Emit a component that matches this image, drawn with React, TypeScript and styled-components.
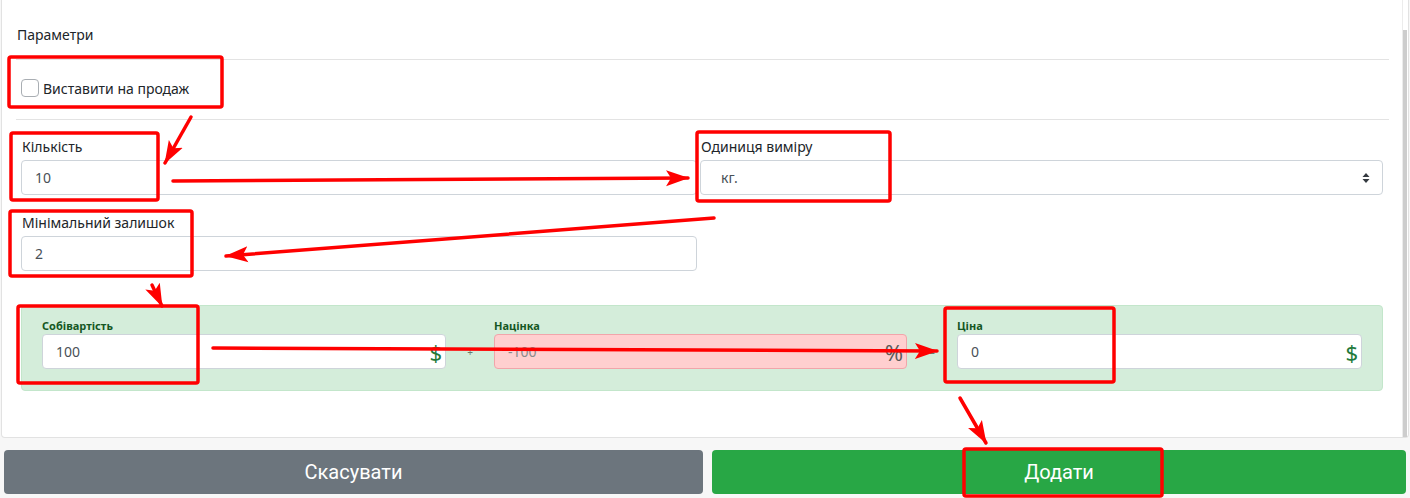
import styled, { createGlobalStyle } from "styled-components";

const GlobalStyle = createGlobalStyle`
	html, body {
		margin: 0;
		padding: 0;
		background: #ffffff;
		font-family: "Noto Sans", "Open Sans", Arial, sans-serif;
		color: #212529;
	}
	* {
		box-sizing: border-box;
	}
`;

export default function App() {
	return (
		<Page>
			<GlobalStyle />
			<Card>
				<CardBody>
					<SectionTitle>Параметри</SectionTitle>
					<CheckRow>
						<CheckBox type="checkbox" />
						<span>Виставити на продаж</span>
					</CheckRow>
					<FieldsGrid>
						<Field>
							<FieldLabel>Кількість</FieldLabel>
							<TextInput defaultValue="10" />
						</Field>
						<Field>
							<FieldLabel>Одиниця виміру</FieldLabel>
							<SelectBox>
								<span>кг.</span>
								<svg width="8" height="12" viewBox="0 0 8 12">
									<path d="M4 1 L7.5 5 H0.5 Z" fill="#343a40" />
									<path d="M4 11 L7.5 7 H0.5 Z" fill="#343a40" />
								</svg>
							</SelectBox>
						</Field>
						<Field>
							<FieldLabel>Мінімальний залишок</FieldLabel>
							<TextInput defaultValue="2" />
						</Field>
					</FieldsGrid>
					<PricePanel>
						<PriceField>
							<SmallLabel>Собівартість</SmallLabel>
							<AddonInput>
								<span>100</span>
								<Addon>$</Addon>
							</AddonInput>
						</PriceField>
						<Sign>+</Sign>
						<PriceField>
							<SmallLabel>Націнка</SmallLabel>
							<AddonInput $danger>
								<span>-100</span>
								<Addon $muted>%</Addon>
							</AddonInput>
						</PriceField>
						<Sign>=</Sign>
						<PriceField>
							<SmallLabel>Ціна</SmallLabel>
							<AddonInput>
								<span>0</span>
								<Addon>$</Addon>
							</AddonInput>
						</PriceField>
					</PricePanel>
				</CardBody>
				<ScrollTrack>
					<ScrollThumb />
				</ScrollTrack>
			</Card>
			<Footer>
				<ActionButton $variant="secondary">Скасувати</ActionButton>
				<ActionButton $variant="success">Додати</ActionButton>
			</Footer>
			<Annotations width="1410" height="498" viewBox="0 0 1410 498">
				<defs>
					<marker id="head" markerUnits="userSpaceOnUse" markerWidth="24" markerHeight="18" refX="22" refY="9" orient="auto">
						<path d="M0 1 L23 9 L0 17 L5 9 Z" fill="#ff0000" />
					</marker>
				</defs>
				<g fill="none" stroke="#ff0000" strokeWidth="3.5">
					<rect x="9" y="57" width="213" height="50" rx="2" />
					<rect x="11" y="133" width="147" height="67" rx="2" />
					<rect x="10" y="211" width="182" height="65" rx="2" />
					<rect x="697" y="132" width="193" height="69" rx="2" />
					<rect x="18" y="306" width="180" height="77" rx="2" />
					<rect x="945" y="308" width="169" height="74" rx="2" />
					<rect x="964" y="449" width="198" height="47" rx="2" />
				</g>
				<g fill="none" stroke="#ff0000" strokeWidth="3.5" strokeLinecap="round" markerEnd="url(#head)">
					<line x1="191" y1="117" x2="165" y2="163" />
					<line x1="173" y1="181" x2="688" y2="178" />
					<line x1="714" y1="218" x2="226" y2="256" />
					<line x1="152" y1="285" x2="162" y2="306" />
					<line x1="213" y1="348" x2="937" y2="351" />
					<line x1="960" y1="398" x2="986" y2="443" />
				</g>
			</Annotations>
		</Page>
	);
}

const Page = styled.div`
	position: relative;
	width: 1410px;
	height: 498px;
	display: flex;
	flex-direction: column;
	background: #f7f7f7;
	overflow: hidden;
`;

const Card = styled.div`
	display: flex;
	height: 438px;
	margin: 0 1px 0 1px;
	background: #ffffff;
	border: 1px solid #e2e2e2;
	border-top: none;
	border-radius: 0 0 4px 4px;
`;

const CardBody = styled.div`
	flex: 1;
	padding: 0 13px 0 14px;
`;

const ScrollTrack = styled.div`
	width: 6px;
	display: flex;
	flex-direction: column;
	padding-top: 30px;
	border-left: 1px solid #ececec;
`;

const ScrollThumb = styled.div`
	flex: 1;
	width: 4px;
	background: #cdcdcd;
`;

const SectionTitle = styled.div`
	padding: 25px 0 14px 1px;
	font-size: 14px;
	line-height: 20px;
	border-bottom: 1px solid #e3e3e3;
`;

const CheckRow = styled.label`
	display: flex;
	align-items: center;
	gap: 4px;
	height: 60px;
	padding: 0 0 3px 5px;
	font-size: 14px;
	border-bottom: 1px solid #e3e3e3;
`;

const CheckBox = styled.input`
	appearance: none;
	width: 18px;
	height: 18px;
	margin: 0;
	border: 1px solid #a9aeb3;
	border-radius: 4px;
	background: #ffffff;
`;

const FieldsGrid = styled.div`
	display: grid;
	grid-template-columns: 676px 1fr;
	column-gap: 3px;
	row-gap: 18px;
	padding: 17px 6px 0 5px;
`;

const Field = styled.div`
	display: flex;
	flex-direction: column;
	gap: 3px;
`;

const FieldLabel = styled.div`
	padding-left: 1px;
	font-size: 14px;
	line-height: 20px;
`;

const TextInput = styled.input`
	height: 35px;
	padding: 0 13px;
	font-family: inherit;
	font-size: 14px;
	color: #495057;
	border: 1px solid #ced4da;
	border-radius: 4px;
	outline: none;
`;

const SelectBox = styled.div`
	display: flex;
	align-items: center;
	justify-content: space-between;
	height: 35px;
	padding: 0 12px 0 20px;
	font-size: 14px;
	color: #495057;
	border: 1px solid #ced4da;
	border-radius: 4px;
`;

const PricePanel = styled.div`
	display: grid;
	grid-template-columns: 404px 48px 413px 50px 1fr;
	margin: 34px 6px 0 5px;
	padding: 13px 20px 21px 20px;
	background: #d4edda;
	border: 1px solid #c3e6cb;
	border-radius: 4px;
`;

const PriceField = styled.div`
	display: flex;
	flex-direction: column;
	gap: 1px;
`;

const SmallLabel = styled.div`
	font-size: 11px;
	line-height: 14px;
	font-weight: 700;
	color: #155724;
`;

const Sign = styled.div`
	align-self: end;
	height: 35px;
	display: flex;
	align-items: center;
	justify-content: center;
	font-size: 10px;
	color: #6b7b6e;
`;

const AddonInput = styled.div<{ $danger?: boolean }>`
	display: flex;
	align-items: center;
	justify-content: space-between;
	height: 35px;
	padding: 0 3px 0 13px;
	font-size: 14px;
	color: ${p => (p.$danger ? "#8a8a8a" : "#495057")};
	background: ${p => (p.$danger ? "#ffcfcf" : "#ffffff")};
	border: 1px solid ${p => (p.$danger ? "#f1a5aa" : "#ced4da")};
	border-radius: 4px;
`;

const Addon = styled.span<{ $muted?: boolean }>`
	font-size: 22px;
	color: ${p => (p.$muted ? "#5a5a5a" : "#237a3b")};
`;

const Footer = styled.div`
	flex: 1;
	display: grid;
	grid-template-columns: 699px 1fr;
	gap: 9px;
	padding: 12px 4px 4px 4px;
`;

const ActionButton = styled.button<{ $variant: "secondary" | "success" }>`
	height: 44px;
	border: none;
	border-radius: 4px;
	font-family: Roboto, "Noto Sans", sans-serif;
	font-size: 20px;
	color: #ffffff;
	background: ${p => (p.$variant === "success" ? "#28a745" : "#6c757d")};
`;

const Annotations = styled.svg`
	position: absolute;
	left: 0;
	top: 0;
	pointer-events: none;
`;
